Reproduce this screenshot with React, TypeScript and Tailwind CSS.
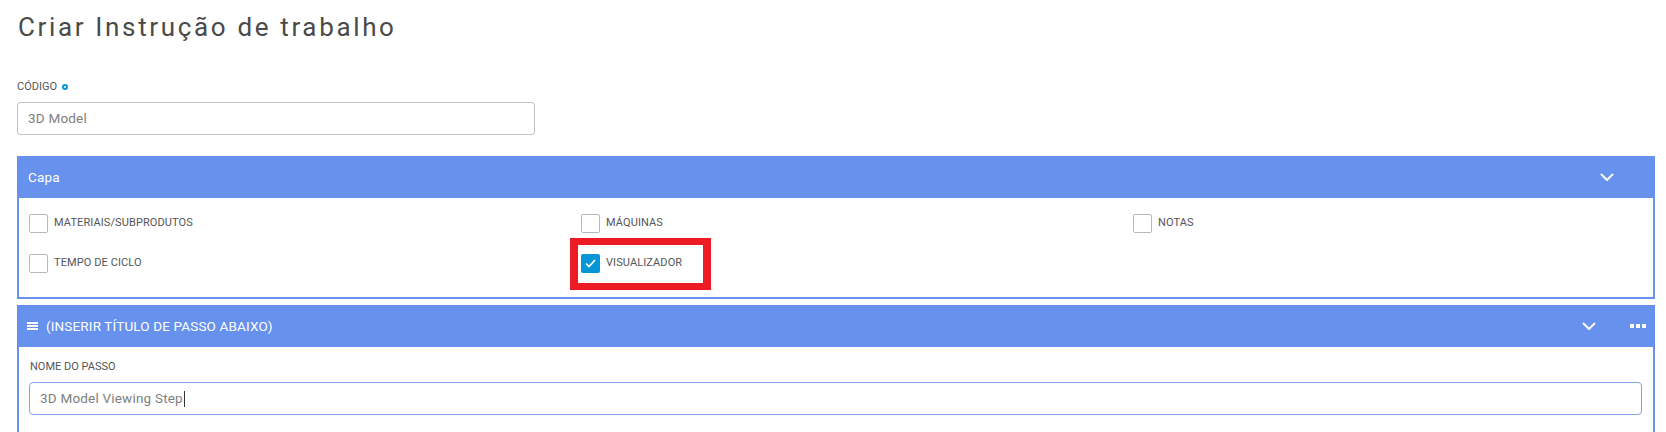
const capaItems = [
  { label: 'MATERIAIS/SUBPRODUTOS', checked: false },
  { label: 'MÁQUINAS', checked: false },
  { label: 'NOTAS', checked: false },
  { label: 'TEMPO DE CICLO', checked: false },
  { label: 'VISUALIZADOR', checked: true, highlight: true },
]

function Chevron() {
  return (
    <svg width="14" height="8" viewBox="0 0 14 8" fill="none">
      <polyline points="1,1 7,7 13,1" stroke="white" strokeWidth="2" />
    </svg>
  )
}

function Checkbox({ checked }: { checked: boolean }) {
  if (checked) {
    return (
      <div className="w-[19px] h-[19px] rounded-[2px] bg-[#0696d7] flex items-center justify-center">
        <svg width="11" height="9" viewBox="0 0 11 9" fill="none">
          <polyline points="1,4.5 4,7.5 10,1" stroke="white" strokeWidth="1.6" />
        </svg>
      </div>
    )
  }
  return <div className="w-[19px] h-[19px] rounded-[2px] border border-[#b8b8b8] bg-white" />
}

export default function App() {
  return (
    <div className="w-[1666px] h-[432px] overflow-hidden bg-white font-['Roboto',sans-serif]">
      <div className="pl-[17px] pr-[11px]">
        <h1 className="mt-[11px] pl-px text-[26px] leading-[32px] tracking-[2.65px] text-[#4a4a4a] font-normal">
          Criar Instrução de trabalho
        </h1>

        {/* Código */}
        <div className="mt-[37px] flex items-center h-[14px] text-[11px] leading-[14px] text-[#555]">
          <span>CÓDIGO</span>
          <span className="ml-[5px] w-[6px] h-[6px] rounded-full border-2 border-[#0696d7]" />
        </div>
        <div className="mt-[8px] w-[518px] h-[33px] rounded-[3px] border border-[#c2c2c2] flex items-center pl-[10px] text-[13.5px] tracking-[0.2px] text-[#808080]">
          3D Model
        </div>

        {/* Capa */}
        <div className="mt-[21px]">
          <div className="h-[42px] bg-[#6691ed] flex items-center justify-between pl-[11px] pr-[41px] text-white text-[13.5px] tracking-[0.2px]">
            <span>Capa</span>
            <Chevron />
          </div>
          <div className="border-x-2 border-b-2 border-[#6691ed] pl-[10px] pt-[16px] pb-[24px]">
            <div className="grid grid-cols-[552px_552px_1fr] gap-y-[21px]">
              {capaItems.map((item) => (
                <div key={item.label} className="relative flex items-center h-[19px]">
                  {item.highlight && (
                    <div className="absolute left-[-11px] top-[-16px] w-[141px] h-[52px] border-x-8 border-y-[7px] border-[#ed1c24]" />
                  )}
                  <Checkbox checked={item.checked} />
                  <span className="ml-[6px] text-[11px] tracking-[0.1px] text-[#555]">{item.label}</span>
                </div>
              ))}
            </div>
          </div>
        </div>

        {/* Passo */}
        <div className="mt-[6px]">
          <div className="h-[42px] bg-[#6691ed] flex items-center pl-[10px] text-white text-[13.5px] tracking-[0.15px]">
            <div className="flex flex-col gap-px w-[11px]">
              <div className="h-[2px] bg-white" />
              <div className="h-[2px] bg-white" />
              <div className="h-[2px] bg-white" />
            </div>
            <span className="ml-[8px] flex-1">(INSERIR TÍTULO DE PASSO ABAIXO)</span>
            <Chevron />
            <div className="ml-[34px] mr-[9px] flex gap-[2px]">
              <div className="w-[4px] h-[4px] bg-white" />
              <div className="w-[4px] h-[4px] bg-white" />
              <div className="w-[4px] h-[4px] bg-white" />
            </div>
          </div>
          <div className="border-x-2 border-[#6691ed] pl-[10px] pr-[11px] pt-[13px] pb-[20px]">
            <div className="pl-px text-[11px] leading-[14px] text-[#555]">NOME DO PASSO</div>
            <div className="mt-[8px] h-[33px] rounded-[4px] border border-[#7fa3e8] flex items-center pl-[10px] text-[13.5px] tracking-[0.2px] text-[#808080]">
              3D Model Viewing Step
              <span className="ml-px w-px h-[16px] bg-[#333]" />
            </div>
          </div>
        </div>
      </div>
    </div>
  )
}
